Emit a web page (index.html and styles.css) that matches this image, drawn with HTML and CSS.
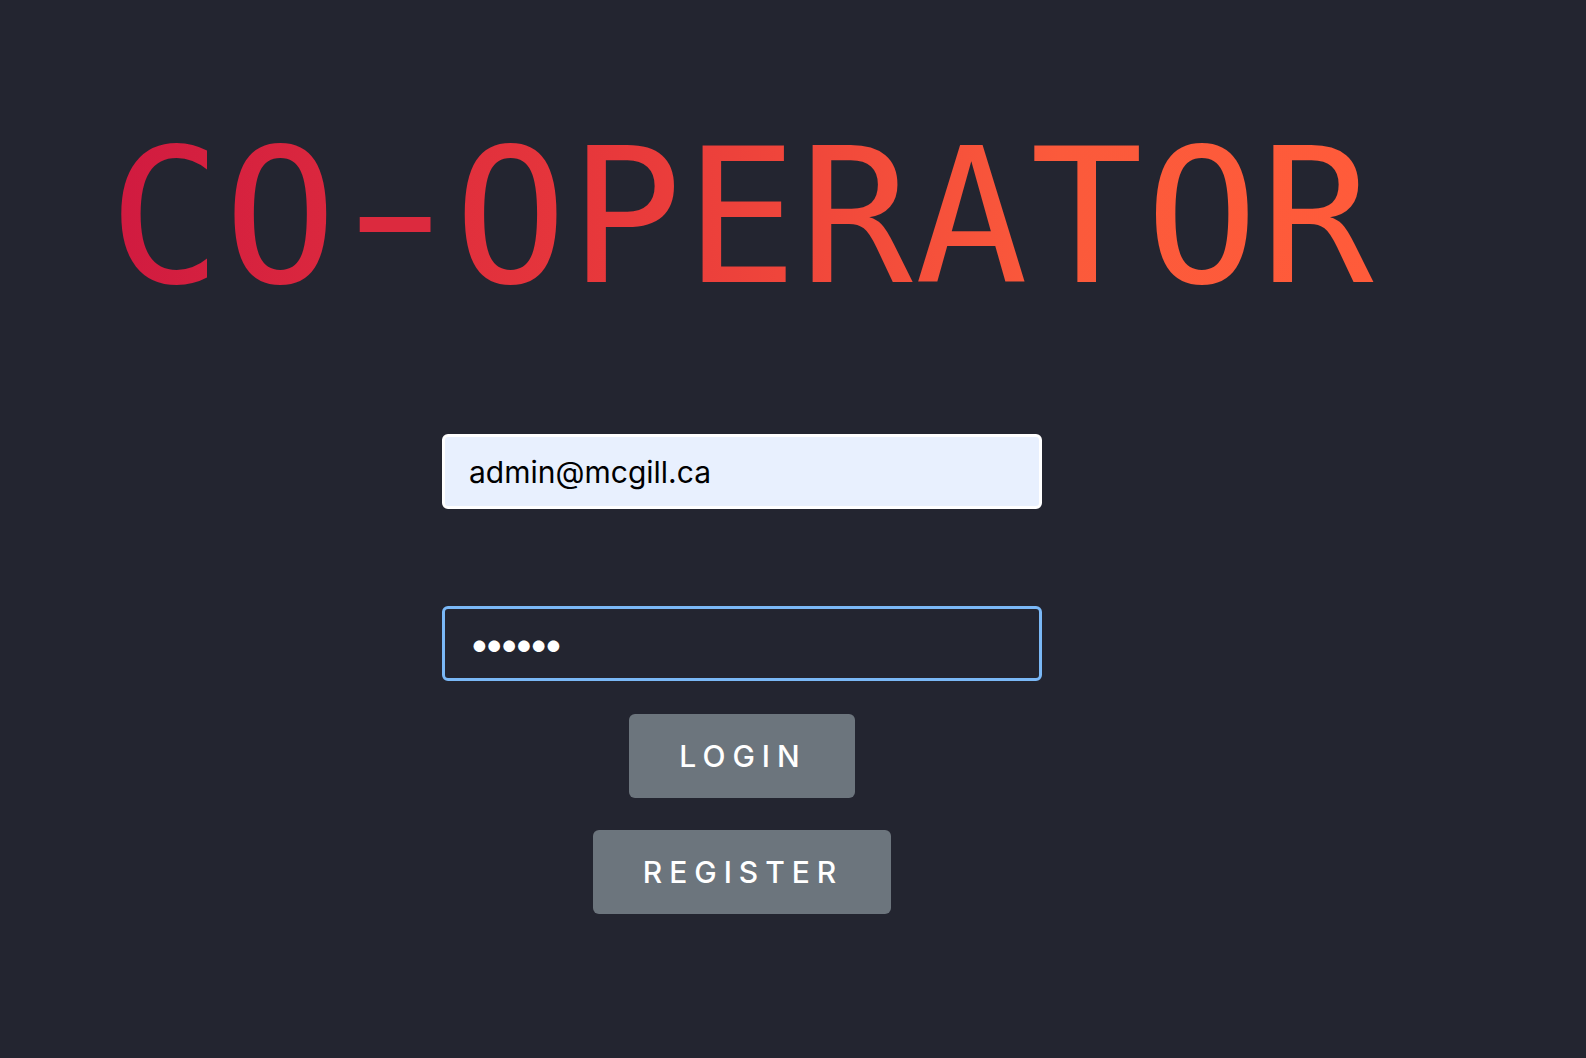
FILE: index.html
```html
<!DOCTYPE html>
<html lang="en">
<head>
<meta charset="utf-8">
<title>Co-Operator</title>
<link rel="stylesheet" href="styles.css">
</head>
<body>
<main class="page">
  <h1 class="title">CO<span class="dash">-</span>OPERATOR</h1>
  <form class="login">
    <input class="field field-email" type="email" value="admin@mcgill.ca">
    <input class="field field-password" type="password" value="123456">
    <button class="btn" type="button">LOGIN</button>
    <button class="btn" type="button">REGISTER</button>
  </form>
</main>
</body>
</html>
```
FILE: styles.css
```css
html, body {
  margin: 0;
  padding: 0;
  background: #232530;
  height: 100%;
}

.page {
  width: 1484px;
  padding-top: 123px;
  display: flex;
  flex-direction: column;
  align-items: center;
}

.title {
  margin: 0;
  font-family: "DejaVu Sans Mono", monospace;
  font-weight: normal;
  font-size: 188px;
  line-height: 188px;
  letter-spacing: 2px;
  background: linear-gradient(90deg, #d01a40 0%, #e8393b 40%, #fb5a3b 75%, #ff5b3a 100%);
  -webkit-background-clip: text;
  background-clip: text;
  color: transparent;
}

.dash {
  display: inline-block;
  color: #dc2a3e;
  -webkit-text-fill-color: #dc2a3e;
  transform: translateY(-6px) scaleX(1.48);
}

.login {
  margin-top: 123px;
  display: flex;
  flex-direction: column;
  align-items: center;
}

.field {
  box-sizing: border-box;
  width: 600px;
  height: 75px;
  border-radius: 6px;
  padding: 0 24px;
  font-family: "Inter", "Liberation Sans", sans-serif;
  font-size: 30px;
  outline: none;
}

.field-email {
  border: 3px solid #ffffff;
  background: #e8f0fe;
  color: #000000;
}

.field-password {
  margin-top: 97px;
  border: 3px solid #7ab8f6;
  background: #232530;
  color: #ffffff;
  font-size: 37px;
  letter-spacing: -6px;
  padding-left: 24px;
}

.btn {
  margin-top: 33px;
  height: 84px;
  padding: 0 48px 0 50px;
  border: none;
  border-radius: 6px;
  background: #6c757d;
  color: #ffffff;
  font-family: "Inter", "Liberation Sans", sans-serif;
  font-size: 30px;
  font-weight: 500;
  letter-spacing: 7px;
}

.btn + .btn {
  margin-top: 32px;
}
```
